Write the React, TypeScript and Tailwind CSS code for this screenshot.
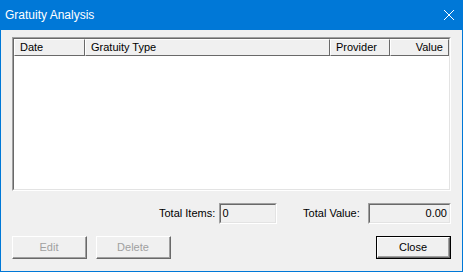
import React from "react";

const font = { fontFamily: '"Liberation Sans", Arial, sans-serif' };

function HeaderCell({ label, width, right }: { label: string; width: string; right?: boolean }) {
    return (
        <div className={`${width} h-[17px] border-t border-l border-t-white border-l-white border-b border-r border-b-[#696969] border-r-[#696969] flex items-center px-[5px] ${right ? "justify-end" : ""}`}>
            <span className="leading-none">{label}</span>
        </div>
    )
}

function Button({ label, disabled, primary }: { label: string; disabled?: boolean; primary?: boolean }) {
    return (
        <div className={`w-[75px] h-[23px] ${primary ? "border border-black" : ""}`}>
            <div className="w-full h-full border-t border-l border-t-white border-l-white border-b border-r border-b-[#696969] border-r-[#696969]">
                <div className={`w-full h-full flex items-center justify-center border-b border-r border-b-[#a0a0a0] border-r-[#a0a0a0] ${disabled ? "text-[#a0a0a0]" : "text-black"}`}>
                    {label}
                </div>
            </div>
        </div>
    )
}

function Field({ value, width, right }: { value: string; width: string; right?: boolean }) {
    return (
        <div className={`${width} h-[21px] border-t border-l border-t-[#a0a0a0] border-l-[#a0a0a0] border-b border-r border-b-white border-r-white`}>
            <div className={`w-full h-full border-t border-l border-t-[#696969] border-l-[#696969] border-b border-r border-b-[#e3e3e3] border-r-[#e3e3e3] bg-[#f0f0f0] flex items-center px-[2px] ${right ? "justify-end" : ""}`}>
                {value}
            </div>
        </div>
    )
}

export default function App() {
    return (
        <div className="w-[463px] h-[272px] bg-[#0078d7] flex flex-col text-[11px] text-black" style={font}>
            <div className="h-[30px] flex items-center justify-between pl-[5px] pr-[7px]">
                <span className="text-white text-[12px]">Gratuity Analysis</span>
                <svg width="12" height="12" viewBox="0 0 12 12" className="mr-[1px]">
                    <path d="M1 1 L11 11 M11 1 L1 11" stroke="white" strokeWidth="1" />
                </svg>
            </div>
            <div className="flex-1 mx-[1px] mb-[1px] bg-[#f0f0f0] pt-[7px] px-[11px] pb-[11px] flex flex-col">
                <div className="h-[154px] border-t border-l border-t-[#a0a0a0] border-l-[#a0a0a0] border-b border-r border-b-white border-r-white">
                    <div className="w-full h-full border-t border-l border-t-[#696969] border-l-[#696969] border-b border-r border-b-[#e3e3e3] border-r-[#e3e3e3] bg-white">
                        <div className="flex bg-[#f0f0f0] w-[435px]">
                            <HeaderCell label="Date" width="w-[71px]" />
                            <HeaderCell label="Gratuity Type" width="w-[245px]" />
                            <HeaderCell label="Provider" width="w-[60px]" />
                            <HeaderCell label="Value" width="w-[59px]" right />
                        </div>
                    </div>
                </div>
                <div className="flex items-center mt-[12px] h-[21px]">
                    <span className="ml-[147px] w-[60px]">Total Items:</span>
                    <Field value="0" width="w-[59px]" />
                    <span className="ml-[26px] w-[65px]">Total Value:</span>
                    <Field value="0.00" width="w-[84px]" right />
                </div>
                <div className="flex mt-[12px]">
                    <Button label="Edit" disabled />
                    <div className="ml-[9px]"><Button label="Delete" disabled /></div>
                    <div className="ml-auto"><Button label="Close" primary /></div>
                </div>
            </div>
        </div>
    )
}
